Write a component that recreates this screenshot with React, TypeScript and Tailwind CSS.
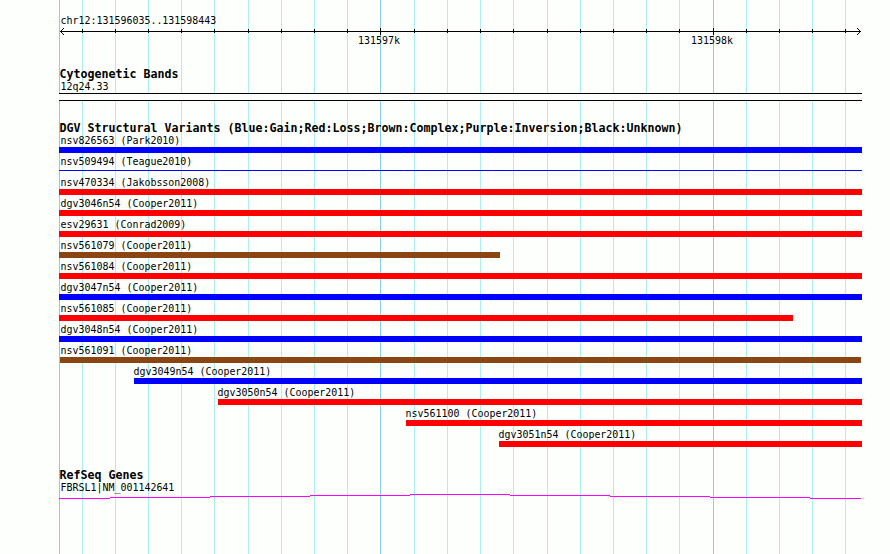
const majorLines = [59, 380, 713];
const minorLines = [
  82, 115, 148, 181, 214, 248, 281, 314, 347, 414, 447, 480, 513, 547, 580, 613, 646, 679, 746, 779, 812, 845,
];

const TRACK_START = 59;

type Variant = { name: string; start: number; end: number; color: string; thin?: boolean };

const variants: Variant[] = [
  { name: "nsv826563 (Park2010)", start: 59, end: 862, color: "bg-[#0000ff]" },
  { name: "nsv509494 (Teague2010)", start: 59, end: 862, color: "bg-[#0000ff]", thin: true },
  { name: "nsv470334 (Jakobsson2008)", start: 59, end: 862, color: "bg-[#ff0000]" },
  { name: "dgv3046n54 (Cooper2011)", start: 59, end: 862, color: "bg-[#ff0000]" },
  { name: "esv29631 (Conrad2009)", start: 59, end: 862, color: "bg-[#ff0000]" },
  { name: "nsv561079 (Cooper2011)", start: 59, end: 500, color: "bg-[#8b4513]" },
  { name: "nsv561084 (Cooper2011)", start: 59, end: 862, color: "bg-[#ff0000]" },
  { name: "dgv3047n54 (Cooper2011)", start: 59, end: 862, color: "bg-[#0000ff]" },
  { name: "nsv561085 (Cooper2011)", start: 59, end: 793, color: "bg-[#ff0000]" },
  { name: "dgv3048n54 (Cooper2011)", start: 59, end: 862, color: "bg-[#0000ff]" },
  { name: "nsv561091 (Cooper2011)", start: 60, end: 861, color: "bg-[#8b4513]" },
  { name: "dgv3049n54 (Cooper2011)", start: 134, end: 862, color: "bg-[#0000ff]" },
  { name: "dgv3050n54 (Cooper2011)", start: 218, end: 862, color: "bg-[#ff0000]" },
  { name: "nsv561100 (Cooper2011)", start: 406, end: 862, color: "bg-[#ff0000]" },
  { name: "dgv3051n54 (Cooper2011)", start: 499, end: 862, color: "bg-[#ff0000]" },
];

const geneSteps = [
  [59, 110, 4],
  [110, 210, 3],
  [210, 310, 2],
  [310, 410, 1],
  [410, 510, 0],
  [510, 610, 1],
  [610, 710, 2],
  [710, 810, 3],
  [810, 861, 4],
];

function GridLines() {
  return (
    <svg className="absolute inset-0" width="890" height="554" shapeRendering="crispEdges">
      {minorLines.map((x) => (
        <rect key={x} x={x} y="0" width="1" height="554" fill="#afeeee" />
      ))}
      {majorLines.map((x) => (
        <rect key={x} x={x} y="0" width="1" height="554" fill="#87ceeb" />
      ))}
    </svg>
  );
}

function Label({ children }: { children: string }) {
  return <div className="h-3 origin-bottom scale-y-110 text-[9.967px] leading-3 whitespace-pre">{children}</div>;
}

function Heading({ children }: { children: string }) {
  return (
    <h2 className="h-[13px] pl-[0.5px] text-[11.64px] leading-[13px] font-bold whitespace-pre">{children}</h2>
  );
}

function Ruler() {
  return (
    <svg className="block h-[7px] w-[803px]" viewBox="59 28 803 7" shapeRendering="crispEdges">
      <rect x="60" y="31" width="801" height="1" />
      {minorLines.map((x) => (
        <rect key={x} x={x} y="29" width="1" height="4" />
      ))}
      {majorLines.slice(1).map((x) => (
        <rect key={x} x={x} y="28" width="1" height="7" />
      ))}
      {[1, 2, 3].map((d) => (
        <g key={d}>
          <rect x={60 + d} y={31 - d} width="1" height="1" />
          <rect x={60 + d} y={31 + d} width="1" height="1" />
          <rect x={860 - d} y={31 - d} width="1" height="1" />
          <rect x={860 - d} y={31 + d} width="1" height="1" />
        </g>
      ))}
    </svg>
  );
}

export default function App() {
  return (
    <div className="relative h-[554px] w-[890px] overflow-hidden bg-[#fdfffc] font-['DejaVu_Sans_Mono',monospace] text-black">
      <GridLines />
      <main className="relative flex w-[862px] flex-col pt-[15px] pl-[59px]">
        <div className="h-[13px] pl-[1.5px]">
          <Label>chr12:131596035..131598443</Label>
        </div>
        <Ruler />
        <div className="flex h-[33px] pl-[299px]">
          <div className="w-[333px]">
            <Label>131597k</Label>
          </div>
          <Label>131598k</Label>
        </div>

        <section className="h-[54px]">
          <Heading>Cytogenetic Bands</Heading>
          <div className="h-[12px] pl-[1.5px]">
            <Label>12q24.33</Label>
          </div>
          <div className="h-2 border-y border-black bg-[#fdfffc]" />
        </section>

        <section className="h-[347px]">
          <Heading>DGV Structural Variants (Blue:Gain;Red:Loss;Brown:Complex;Purple:Inversion;Black:Unknown)</Heading>
          {variants.map((v) => (
            <div
              key={v.name}
              className="flex h-[21px] flex-col"
              style={{ marginLeft: v.start - TRACK_START, width: v.end - v.start }}
            >
              <div className={v.start === 59 ? "h-3 pl-[1.5px]" : v.start === 60 ? "h-3 pl-[0.5px]" : "-ml-[0.5px] h-3"}>
                <Label>{v.name}</Label>
              </div>
              <div className={`${v.color} ${v.thin ? "mt-[2px] h-px" : "h-1.5"}`} />
            </div>
          ))}
        </section>

        <section>
          <Heading>RefSeq Genes</Heading>
          <div className="h-3 pl-[1.5px]">
            <Label>FBRSL1|NM_001142641</Label>
          </div>
          <svg className="block h-[5px] w-[803px]" viewBox="59 0 803 5" shapeRendering="crispEdges">
            {geneSteps.map(([start, end, y]) => (
              <rect key={start} x={start} y={y} width={end - start} height="1" fill="#ff00ff" />
            ))}
          </svg>
        </section>
      </main>
    </div>
  );
}
